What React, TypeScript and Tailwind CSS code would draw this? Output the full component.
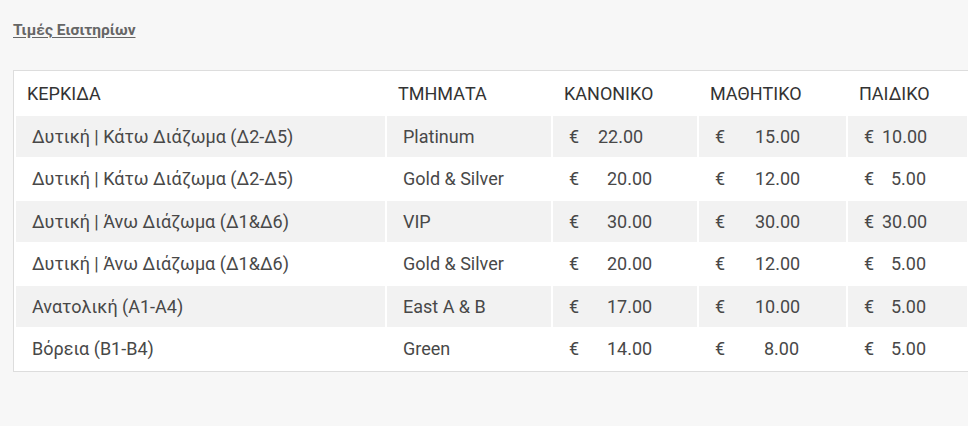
type Price = { w: string; v: string };

type Row = {
  stand: string;
  section: string;
  prices: Price[];
};

const rows: Row[] = [
  {
    stand: "Δυτική | Κάτω Διάζωμα (Δ2-Δ5)",
    section: "Platinum",
    prices: [
      { w: "w-[29px]", v: "22.00" },
      { w: "w-[40px]", v: "15.00" },
      { w: "w-[18px]", v: "10.00" },
    ],
  },
  {
    stand: "Δυτική | Κάτω Διάζωμα (Δ2-Δ5)",
    section: "Gold & Silver",
    prices: [
      { w: "w-[38px]", v: "20.00" },
      { w: "w-[40px]", v: "12.00" },
      { w: "w-[27px]", v: "5.00" },
    ],
  },
  {
    stand: "Δυτική | Άνω Διάζωμα (Δ1&Δ6)",
    section: "VIP",
    prices: [
      { w: "w-[38px]", v: "30.00" },
      { w: "w-[40px]", v: "30.00" },
      { w: "w-[18px]", v: "30.00" },
    ],
  },
  {
    stand: "Δυτική | Άνω Διάζωμα (Δ1&Δ6)",
    section: "Gold & Silver",
    prices: [
      { w: "w-[38px]", v: "20.00" },
      { w: "w-[40px]", v: "12.00" },
      { w: "w-[27px]", v: "5.00" },
    ],
  },
  {
    stand: "Ανατολική (Α1-Α4)",
    section: "East A & B",
    prices: [
      { w: "w-[38px]", v: "17.00" },
      { w: "w-[40px]", v: "10.00" },
      { w: "w-[27px]", v: "5.00" },
    ],
  },
  {
    stand: "Βόρεια (Β1-Β4)",
    section: "Green",
    prices: [
      { w: "w-[38px]", v: "14.00" },
      { w: "w-[49px]", v: "8.00" },
      { w: "w-[27px]", v: "5.00" },
    ],
  },
];

const headers = ["ΚΕΡΚΙΔΑ", "ΤΜΗΜΑΤΑ", "ΚΑΝΟΝΙΚΟ", "ΜΑΘΗΤΙΚΟ", "ΠΑΙΔΙΚΟ"];

export default function App() {
  return (
    <div
      className="min-h-[426px] w-full overflow-hidden bg-[#f7f7f7] pl-[13px] pt-[18px] text-[#484848]"
      style={{ fontFamily: "Roboto, 'Noto Sans', sans-serif" }}
    >
      <a href="#" className="text-[15.5px] font-bold leading-[20px] text-[#666] underline underline-offset-2">
        Τιμές Εισιτηρίων
      </a>

      <div className="mt-[28px] w-[980px] border border-[#dddddd] bg-white">
        <table className="table-fixed border-separate border-spacing-[2px] text-[18px]">
          <colgroup>
            <col className="w-[369px]" />
            <col className="w-[164px]" />
            <col className="w-[144px]" />
            <col className="w-[147px]" />
            <col className="w-[119px]" />
          </colgroup>
          <thead>
            <tr className="h-[41px]">
              {headers.map((h) => (
                <th key={h} className="px-[11px] text-left font-normal text-[#333]">
                  {h}
                </th>
              ))}
            </tr>
          </thead>
          <tbody>
            {rows.map((r, i) => {
              const bg = i % 2 === 0 ? "bg-[#f2f2f2]" : "bg-white";
              return (
                <tr key={i} className="h-[40.5px]">
                  <td className={`${bg} pl-4`}>{r.stand}</td>
                  <td className={`${bg} pl-4`}>{r.section}</td>
                  {r.prices.map((p, j) => (
                    <td key={j} className={`${bg} whitespace-nowrap pl-4`}>
                      <span className={`inline-block ${p.w}`}>€</span>
                      <span>{p.v}</span>
                    </td>
                  ))}
                </tr>
              );
            })}
          </tbody>
        </table>
      </div>
    </div>
  );
}
